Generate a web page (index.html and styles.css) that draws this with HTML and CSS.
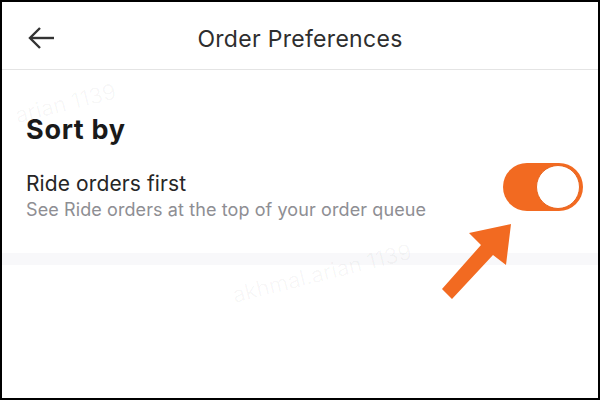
FILE: index.html
```html
<!DOCTYPE html>
<html lang="en">
<head>
<meta charset="utf-8">
<title>Order Preferences</title>
<link rel="stylesheet" href="styles.css">
</head>
<body>
<div class="screen">
  <header class="topbar">
    <button class="back" aria-label="Back">
      <svg width="28" height="24" viewBox="0 0 28 24" fill="none" stroke="#333" stroke-width="2.4" stroke-linejoin="miter">
        <path d="M3 12 H27"/>
        <path d="M13 2 L3 12 L13 22"/>
      </svg>
    </button>
    <h1 class="title">Order Preferences</h1>
    <span class="spacer"></span>
  </header>

  <section class="prefs">
    <h2 class="section-title">Sort by</h2>
    <div class="pref-row">
      <div class="pref-text">
        <div class="pref-label">Ride orders first</div>
        <div class="pref-desc">See Ride orders at the top of your order queue</div>
      </div>
      <div class="toggle on" role="switch" aria-checked="true"><span class="knob"></span></div>
    </div>
  </section>
  <div class="band"></div>

  <span class="wm wm1">arian 1139</span>
  <span class="wm wm2">akhmal.arian 1139</span>

  <svg class="pointer" width="75" height="82" viewBox="0 0 75 82">
    <polygon points="71,4 29,13 41,25 2,69 12,79 53,35 66,45" fill="#f26a21"/>
  </svg>
</div>
</body>
</html>
```

FILE: styles.css
```css
* { box-sizing: border-box; }
html, body { margin: 0; padding: 0; }
body {
  width: 600px;
  height: 400px;
  border: 2px solid #000;
  background: #fff;
  font-family: Inter, "Liberation Sans", Arial, sans-serif;
  overflow: hidden;
}
.screen {
  position: relative;
  width: 100%;
  height: 100%;
  overflow: hidden;
}
.topbar {
  height: 68px;
  padding: 7px 25px 0;
  display: grid;
  grid-template-columns: 1fr auto 1fr;
  align-items: center;
  border-bottom: 1px solid #e4e4e4;
}
.back {
  border: 0;
  background: none;
  padding: 0;
  width: 28px;
  height: 24px;
  margin-top: -2px;
  display: block;
}
.title {
  margin: 0;
  font-size: 23px;
  line-height: 26px;
  font-weight: 400;
  letter-spacing: 0.3px;
  color: #2e2e2e;
}
.prefs {
  padding: 43px 15px 32px 24px;
}
.section-title {
  margin: 0 0 24px;
  font-size: 27px;
  line-height: 34px;
  font-weight: 700;
  letter-spacing: 0.7px;
  color: #1a1a1a;
}
.pref-row {
  display: flex;
  justify-content: space-between;
  align-items: flex-start;
}
.pref-label {
  font-size: 21px;
  line-height: 26px;
  letter-spacing: 0.1px;
  color: #262626;
  margin-bottom: 2px;
}
.pref-desc {
  font-size: 18px;
  line-height: 22px;
  letter-spacing: 0.1px;
  color: #8e8e93;
}
.toggle {
  width: 80px;
  height: 48px;
  border-radius: 24px;
  background: #f26a21;
  margin-top: -8px;
  padding: 2px 3px 2px 0;
  display: flex;
  justify-content: flex-end;
  flex-shrink: 0;
}
.knob {
  width: 44px;
  height: 44px;
  border-radius: 50%;
  background: #fff;
  border: 1.5px solid #e8651f;
}
.band {
  height: 12px;
  background: #f8f8fa;
}
.wm {
  position: absolute;
  font-size: 22px;
  color: rgba(0, 0, 0, 0.035);
  white-space: nowrap;
  pointer-events: none;
}
.wm1 {
  left: 12px;
  top: 88px;
  transform: rotate(-14deg);
}
.wm2 {
  left: 228px;
  top: 258px;
  transform: rotate(-14deg);
}
.pointer {
  position: absolute;
  left: 438px;
  top: 218px;
}
```
